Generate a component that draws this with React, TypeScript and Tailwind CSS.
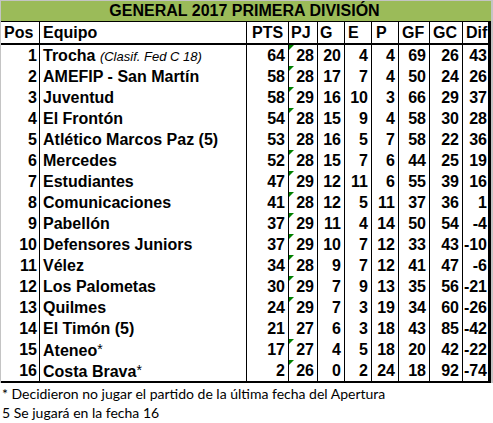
import React from "react";

type Row = {
  pos: number;
  team: React.ReactNode;
  v: (number | string)[];
  tri: boolean;
};

const rows: Row[] = [
  { pos: 1, team: (<>Trocha <span className="italic font-normal text-[13px]">(Clasif. Fed C 18)</span></>), v: [64, 28, 20, 4, 4, 69, 26, 43], tri: true },
  { pos: 2, team: "AMEFIP - San Martín", v: [58, 28, 17, 7, 4, 50, 24, 26], tri: true },
  { pos: 3, team: "Juventud", v: [58, 29, 16, 10, 3, 66, 29, 37], tri: true },
  { pos: 4, team: "El Frontón", v: [54, 28, 15, 9, 4, 58, 30, 28], tri: true },
  { pos: 5, team: "Atlético Marcos Paz (5)", v: [53, 28, 16, 5, 7, 58, 22, 36], tri: false },
  { pos: 6, team: "Mercedes", v: [52, 28, 15, 7, 6, 44, 25, 19], tri: true },
  { pos: 7, team: "Estudiantes", v: [47, 29, 12, 11, 6, 55, 39, 16], tri: true },
  { pos: 8, team: "Comunicaciones", v: [41, 28, 12, 5, 11, 37, 36, 1], tri: true },
  { pos: 9, team: "Pabellón", v: [37, 29, 11, 4, 14, 50, 54, -4], tri: true },
  { pos: 10, team: "Defensores Juniors", v: [37, 29, 10, 7, 12, 33, 43, -10], tri: true },
  { pos: 11, team: "Vélez", v: [34, 28, 9, 7, 12, 41, 47, -6], tri: true },
  { pos: 12, team: "Los Palometas", v: [30, 29, 7, 9, 13, 35, 56, -21], tri: true },
  { pos: 13, team: "Quilmes", v: [24, 29, 7, 3, 19, 34, 60, -26], tri: true },
  { pos: 14, team: "El Timón (5)", v: [21, 27, 6, 3, 18, 43, 85, -42], tri: false },
  { pos: 15, team: (<>Ateneo<span className="font-normal text-[14px] align-[2px]">*</span></>), v: [17, 27, 4, 5, 18, 20, 42, -22], tri: true },
  { pos: 16, team: (<>Costa Brava<span className="font-normal text-[14px] align-[2px]">*</span></>), v: [2, 26, 0, 2, 24, 18, 92, -74], tri: true },
];

const grid =
  "grid grid-cols-[38px_207px_42px_29px_27px_27px_27px_31px_33px_26px]";

function Triangle() {
  return (
    <svg
      className="absolute left-0 top-0"
      width="5"
      height="5"
      viewBox="0 0 5 5"
    >
      <polygon points="0,0 5,0 0,5" fill="#008000" />
    </svg>
  );
}

export default function App() {
  return (
    <div className="w-[493px] h-[423px] bg-white text-black overflow-hidden">
      <div className="flex">
        <div className="w-[491px] border-l border-t border-[#c4c4c4] font-['Liberation_Sans',Arial,sans-serif] font-bold text-[16px] leading-[21px]">
          <div className="h-[21px] bg-[#9bbb59] border-b border-black flex items-center justify-center leading-[20px] pr-[3px]">
            GENERAL 2017 PRIMERA DIVISIÓN
          </div>
          <div className="border-r-[3px] border-b-2 border-black">
            <div className={`${grid} h-[23px] border-b-2 border-black`}>
              <div className="pl-[3px]">Pos</div>
              <div className="border-l border-black pl-[3px]">Equipo</div>
              <div className="border-l border-black pl-[5px]">PTS</div>
              <div className="border-l border-black pl-[2px]">PJ</div>
              <div className="border-l border-black pl-[2px]">G</div>
              <div className="border-l border-black pl-[3px]">E</div>
              <div className="border-l border-black pl-[4px]">P</div>
              <div className="border-l border-black pl-[3px]">GF</div>
              <div className="border-l border-black pl-[3px]">GC</div>
              <div className="border-l border-black pl-[3px]">Dif</div>
            </div>
            {rows.map((r) => (
              <div key={r.pos} className={`${grid} h-[21px]`}>
                <div className="text-right pr-[2px]">{r.pos}</div>
                <div className="border-l border-black pl-[3px] whitespace-nowrap">
                  {r.team}
                </div>
                {r.v.map((n, i) => (
                  <div
                    key={i}
                    className={`relative border-l border-black text-right ${
                      i === 7 ? "pr-[1px]" : "pr-[3px]"
                    }`}
                  >
                    {i === 1 && r.tri ? <Triangle /> : null}
                    {n}
                  </div>
                ))}
              </div>
            ))}
          </div>
        </div>
        <div className="w-[2px] bg-[#c4c4c4]" />
      </div>
      <div className="font-['Lato',sans-serif] text-[14px] leading-[19px] pl-[2px] pt-[1px]">
        <div>* Decidieron no jugar el partido de la última fecha del Apertura</div>
        <div>5 Se jugará en la fecha 16</div>
      </div>
    </div>
  );
}
